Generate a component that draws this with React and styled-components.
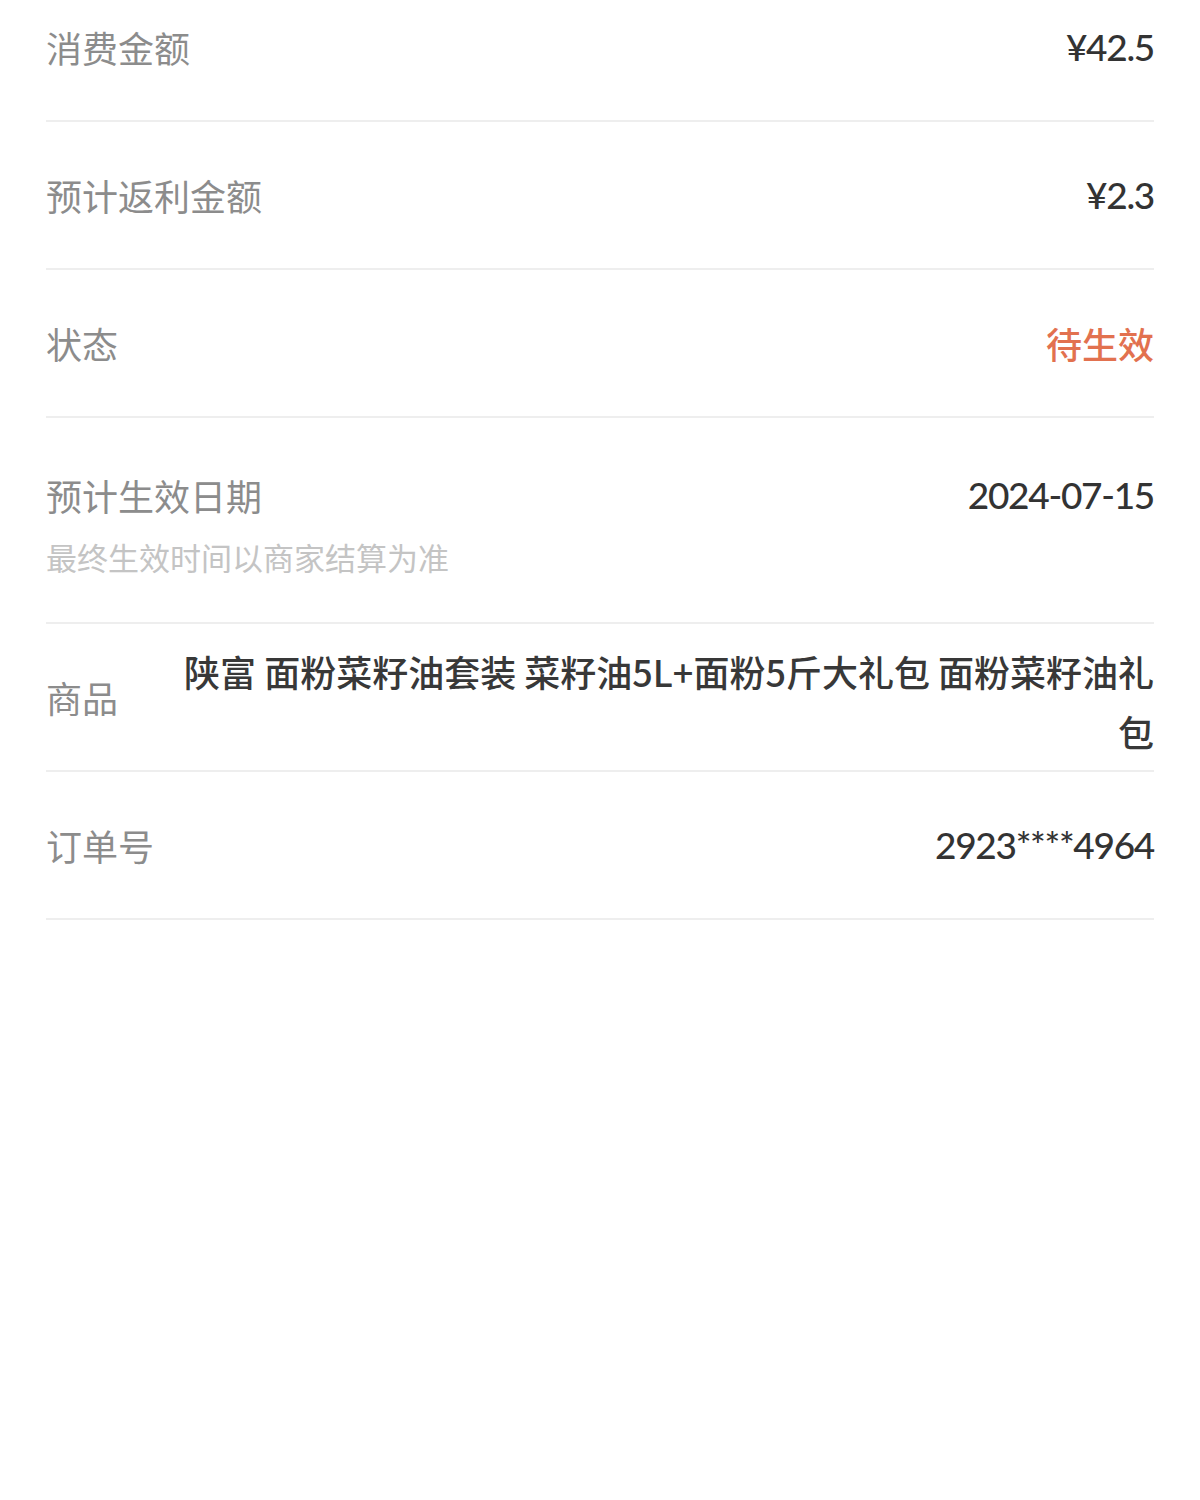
import styled, { createGlobalStyle } from "styled-components";

const GlobalStyle = createGlobalStyle`
  html, body {
    margin: 0;
    padding: 0;
    background: #fff;
  }
  body {
    font-family: "Noto Sans CJK SC", "Noto Sans", sans-serif;
  }
`;

const rows = [
  { label: "消费金额", value: "¥42.5" },
  { label: "预计返利金额", value: "¥2.3" },
  { label: "状态", value: "待生效", tone: "warn" },
];

function App() {
  return (
    <>
      <GlobalStyle />
      <Page>
        <List>
          {rows.map((r) => (
            <Row key={r.label}>
              <Label>{r.label}</Label>
              <Value $tone={r.tone}>{r.value}</Value>
            </Row>
          ))}
          <DateRow>
            <div>
              <Label>预计生效日期</Label>
              <Hint>最终生效时间以商家结算为准</Hint>
            </div>
            <Value>2024-07-15</Value>
          </DateRow>
          <Row>
            <Label>商品</Label>
            <Product>
              陕富 面粉菜籽油套装 菜籽油5L+面粉5斤大礼包 面粉菜籽油礼包
            </Product>
          </Row>
          <Row>
            <Label>订单号</Label>
            <Value>2923****4964</Value>
          </Row>
        </List>
      </Page>
    </>
  );
}

const Page = styled.div`
  padding: 0 46px;
  height: 1500px;
  overflow: hidden;
`;

// list is scrolled a little, so the first row is cut at the top
const List = styled.div`
  margin-top: -26px;
`;

const Row = styled.div`
  display: flex;
  align-items: center;
  justify-content: space-between;
  gap: 64px;
  min-height: 148px;
  border-bottom: 2px solid #eeeeee;
  box-sizing: border-box;
`;

const DateRow = styled(Row)`
  align-items: flex-start;
  padding: 52px 0 40px;
`;

const Label = styled.div`
  flex-shrink: 0;
  font-size: 36px;
  line-height: 50px;
  color: #8c8c8c;
`;

const Hint = styled.div`
  margin-top: 12px;
  font-size: 31px;
  line-height: 50px;
  color: #c4c4c4;
`;

const Value = styled.div`
  font-family: "Lato", "Noto Sans CJK SC", sans-serif;
  font-size: 37px;
  line-height: 50px;
  font-weight: 500;
  letter-spacing: -1.3px;
  color: ${(p) => (p.$tone === "warn" ? "#e2714f" : "#333333")};
  text-align: right;

  ${(p) =>
    p.$tone === "warn" &&
    `
    font-family: "Noto Sans CJK SC", sans-serif;
    font-size: 36px;
    letter-spacing: 0;
  `}
`;

const Product = styled.div`
  flex: 1;
  font-size: 36px;
  line-height: 60px;
  font-weight: 500;
  color: #383838;
  text-align: right;
  padding: 8px 0 0;
`;

export default App;
